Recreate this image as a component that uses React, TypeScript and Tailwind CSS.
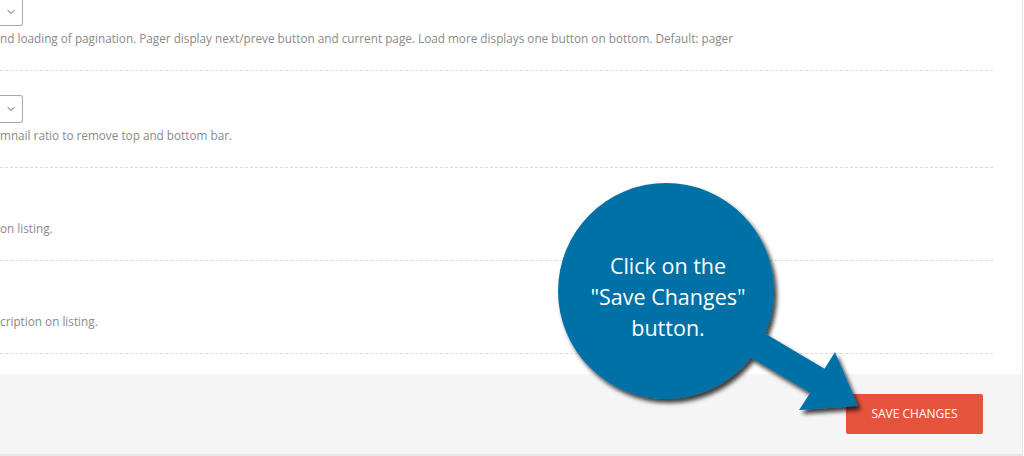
import { ChevronDown } from "lucide-react";

const rows = [
  {
    select: true,
    text: "nd loading of pagination. Pager display next/preve button and current page. Load more displays one button on bottom. Default: pager",
  },
  { select: true, text: "mnail ratio to remove top and bottom bar." },
  { select: false, text: "on listing." },
  { select: false, text: "cription on listing." },
];

function SelectStub() {
  return (
    <div className="w-[23px] h-[28px] border border-l-0 border-[#a9a9a9] rounded-r-[3px] flex items-center pl-[5px] text-[#555]">
      <ChevronDown size={12} strokeWidth={2} />
    </div>
  );
}

function Callout() {
  return (
    <>
      <svg
        className="absolute left-0 top-0 pointer-events-none"
        width={1024}
        height={456}
        viewBox="0 0 1024 456"
      >
        <defs>
          <filter id="shadow" x="-20%" y="-20%" width="140%" height="140%">
            <feDropShadow dx="3" dy="4" stdDeviation="2" floodColor="#000" floodOpacity="0.75" />
          </filter>
        </defs>
        <g filter="url(#shadow)" fill="#0571a6">
          <circle cx="666" cy="291" r="108" />
          <polygon points="741.9,319.8 824.5,368.8 835,352 858,406 799,410 810.3,392.8 727.7,343.8" />
        </g>
      </svg>
      <div className="absolute left-[568px] top-[250px] w-[200px] text-center text-white text-[21.5px] leading-[31px] font-['Open_Sans',sans-serif]">
        Click on the
        <br />
        "Save Changes"
        <br />
        button.
      </div>
    </>
  );
}

export default function App() {
  return (
    <div className="relative w-[1024px] h-[456px] overflow-hidden bg-white font-['Open_Sans',sans-serif]">
      <div className="w-[1023px] h-[456px] border-r border-[#e3e3e3] flex flex-col">
        <div className="pr-[29px] mt-[-2px]">
          {rows.map((r, i) => (
            <div
              key={i}
              className={`border-b border-dashed border-[#dcdcdc] pb-[23px] ${
                i === 0 ? "" : r.select ? "pt-[24px]" : "pt-[48px]"
              }`}
            >
              {r.select && <SelectStub />}
              <p className="text-[11.75px] leading-[18px] text-[#8a8a8a] whitespace-nowrap mt-[3px]">{r.text}</p>
            </div>
          ))}
        </div>
        <div className="mt-[20px] h-[82px] bg-[#f5f5f5] border-b-2 border-[#e6e6e6] flex justify-end items-start pt-[20px] pr-[39px]">
          <button className="w-[137px] h-[40px] bg-[#e5533c] rounded-[2px] text-white text-[12px] uppercase">
            Save Changes
          </button>
        </div>
      </div>
      <Callout />
    </div>
  );
}
